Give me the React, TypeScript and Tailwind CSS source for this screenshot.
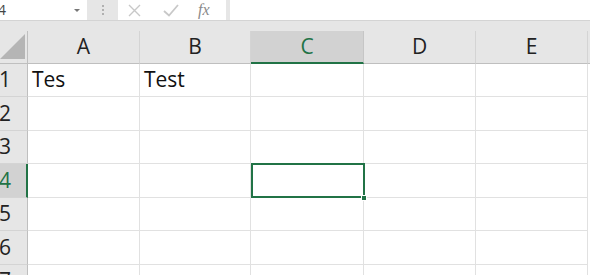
import React from "react";

const cols = ["A", "B", "C", "D", "E"];
const rowHeights = [33, 34, 33, 34, 33, 34, 33];
const font = { fontFamily: '"Open Sans", "Noto Sans", Arial, sans-serif' };

export default function App() {
  return (
    <div className="w-[590px] h-[275px] overflow-hidden bg-[#e6e6e6] relative" style={font}>
      {/* formula bar */}
      <div className="flex h-[21px] bg-[#e6e6e6] border-b border-[#d4d4d4]">
        <div className="w-[87px] h-[20px] bg-white flex items-center justify-between pr-[6px]">
          <span className="text-[14px] text-[#444] leading-none -ml-[2px]">4</span>
          <svg width="8" height="5" viewBox="0 0 8 5"><path d="M1 1 L7 1 L4 4 Z" fill="#777" /></svg>
        </div>
        <div className="w-[31px] flex items-center justify-center">
          <div className="flex flex-col gap-[2px]">
            <span className="w-[2px] h-[2px] bg-[#b0b0b0]" />
            <span className="w-[2px] h-[2px] bg-[#b0b0b0]" />
            <span className="w-[2px] h-[2px] bg-[#b0b0b0]" />
          </div>
        </div>
        <div className="w-[108px] h-[20px] bg-white flex items-center">
          <svg className="ml-[10px]" width="13" height="13" viewBox="0 0 13 13">
            <path d="M1 1 L12 12 M12 1 L1 12" stroke="#c8c8c8" strokeWidth="1.4" />
          </svg>
          <svg className="ml-[22px]" width="16" height="13" viewBox="0 0 16 13">
            <path d="M1 7 L6 11.5 L15 1" stroke="#c8c8c8" strokeWidth="1.8" fill="none" />
          </svg>
          <span
            className="ml-[19px] text-[16px] italic text-[#8a8a8a] leading-none"
            style={{ fontFamily: '"Liberation Serif", serif' }}
          >
            fx
          </span>
        </div>
        <div className="w-[4px]" />
        <div className="flex-1 h-[20px] bg-white" />
      </div>
      <div className="h-[10px]" />

      {/* grid */}
      <div className="relative">
        <div
          className="grid"
          style={{
            gridTemplateColumns: "28px 112px 111px 113px 112px 112px 2px",
            gridTemplateRows: `33px ${rowHeights.map((h) => h + "px").join(" ")}`,
          }}
        >
          {/* corner */}
          <div className="bg-[#e6e6e6] border-r border-b border-[#bfbfbf] relative">
            <svg className="absolute left-0 top-[2px]" width="26" height="27" viewBox="0 0 26 27">
              <path d="M0 26 L25 1 L25 26 Z" fill="#b5b5b5" />
            </svg>
          </div>
          {cols.map((c) => (
            <div
              key={c}
              className={
                c === "C"
                  ? "bg-[#d2d2d2] border-r border-[#c6c6c6] border-b-2 border-b-[#217346] flex items-center justify-center text-[21px] text-[#217346]"
                  : "bg-[#e6e6e6] border-r border-[#d4d4d4] border-b border-b-[#bfbfbf] flex items-center justify-center text-[21px] text-[#222]"
              }
            >
              {c}
            </div>
          ))}
          <div className="bg-[#e6e6e6] border-b border-[#bfbfbf]" />

          {rowHeights.map((_, i) => {
            const r = i + 1;
            const sel = r === 4;
            return (
              <React.Fragment key={r}>
                <div
                  className={
                    sel
                      ? "bg-[#d2d2d2] border-r-2 border-r-[#217346] border-b border-b-[#d4d4d4] flex items-center text-[21px] text-[#217346]"
                      : "bg-[#e6e6e6] border-r border-r-[#bfbfbf] border-b border-b-[#d4d4d4] flex items-center text-[21px] text-[#222]"
                  }
                >
                  <span className="-ml-[1px]">{r}</span>
                </div>
                {cols.map((c) => (
                  <div
                    key={c}
                    className="bg-white border-r border-b border-[#e1e1e1] flex items-center pl-[4px] text-[21px] text-[#111] whitespace-nowrap overflow-hidden"
                  >
                    {r === 1 && c === "A" ? "Tes" : r === 1 && c === "B" ? "Test" : ""}
                  </div>
                ))}
                <div className="bg-white" />
              </React.Fragment>
            );
          })}
        </div>
        {/* selection box C4 */}
        <div className="absolute left-[251px] top-[132px] w-[114px] h-[35px] border-2 border-[#217346]" />
        <div className="absolute left-[361px] top-[164px] w-[6px] h-[6px] bg-[#217346] border border-white" />
      </div>
    </div>
  );
}
